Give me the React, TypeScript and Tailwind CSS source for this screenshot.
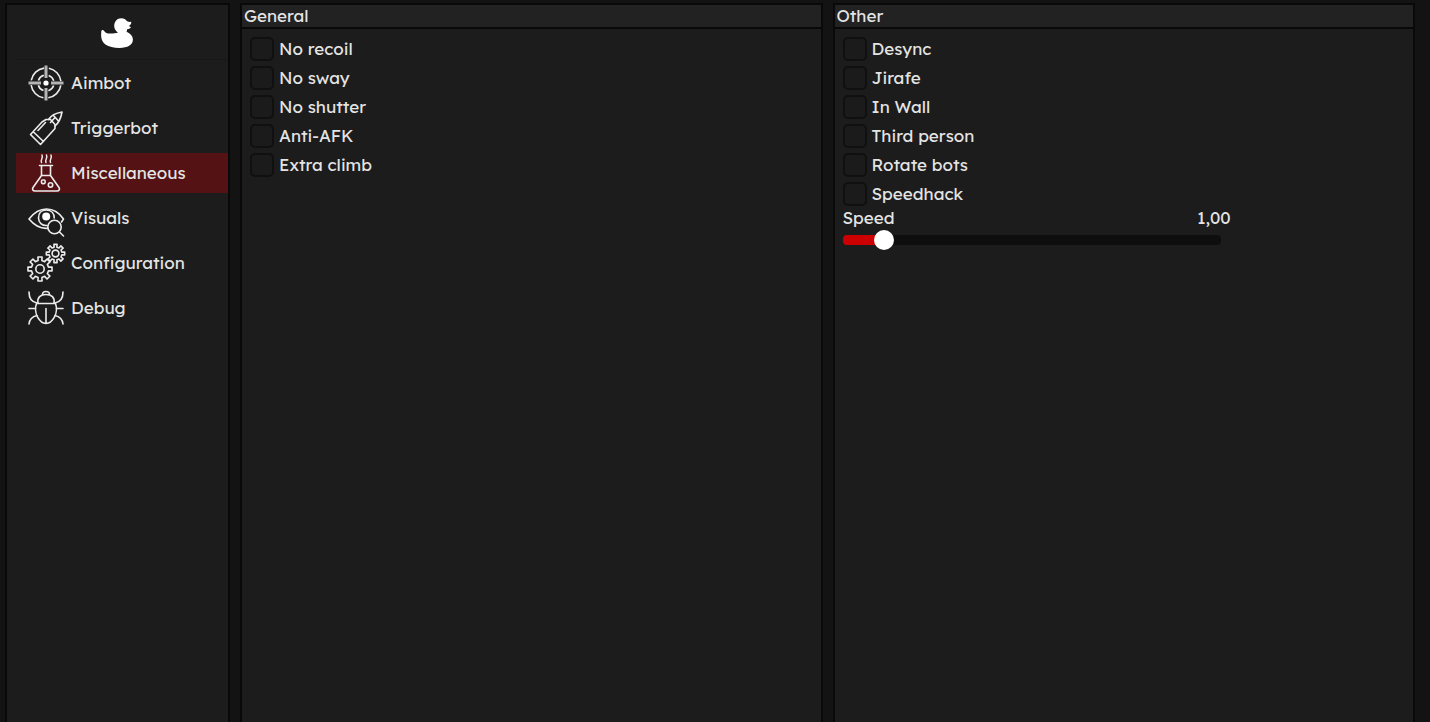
import { useState } from "react";
import type { CSSProperties, ReactNode } from "react";

function Icon({ children }: { children: ReactNode }) {
  return (
    <svg
      viewBox="0 0 40 40"
      className="size-10 shrink-0"
      fill="none"
      stroke="#ececec"
      strokeWidth="1.6"
      strokeLinecap="round"
      strokeLinejoin="round"
      aria-hidden="true"
    >
      {children}
    </svg>
  );
}

function AimIcon() {
  return (
    <Icon>
      <circle cx="20" cy="20" r="15" strokeDasharray="18.6 4.96" strokeDashoffset="-2.48" strokeLinecap="butt" />
      <circle cx="20" cy="20" r="8" strokeDasharray="7.6 4.97" strokeDashoffset="-2.48" strokeLinecap="butt" />
      <path d="M20 2.500v12.500M20 25v12.500M2.500 20h12.500M25 20h12.500" stroke="#b4b4b4" strokeWidth="3" strokeLinecap="butt" />
      <circle cx="20" cy="20" r="2.6" fill="#fff" stroke="none" />
    </Icon>
  );
}

function BulletIcon() {
  return (
    <Icon>
      <path d="M4.500 26.500 14.500 36.500 29 20.500V16.500L24.500 11.500H20L16 14zM7 23.500l10.500 10M12 22.500l7.500-8" />
      <path d="M22.500 11.500C25 7.500 30 5 36 4 35 10 33 14.500 29 18M27.500 7.500l4.500 5M24.500 14.500 29 9.500" />
    </Icon>
  );
}

function FlaskIcon() {
  return (
    <Icon>
      <path d="M13.500 12.500h13M15.500 13v9.500L7 34.500c-1.200 2 0 3.500 2 3.500h22c2 0 3.200-1.500 2-3.500L24.500 22.500V13M15.500 22.500h9" />
      <rect x="15.500" y="27" width="3.600" height="3.600" rx="1" />
      <circle cx="24.500" cy="32" r="2.200" />
      <path d="M15.500 9.500c-1.600-2.500 2-4 .5-7.500M20 9.500c-1.600-2.500 2-4 .5-7.500M24.500 9.500c-1.600-2.500 2-4 .5-7.500" strokeWidth="1.500" />
    </Icon>
  );
}

function EyeIcon() {
  return (
    <Icon>
      <path d="M22 30.300C14.500 31 8 27 3 21 8 14.500 14 11 20.500 11S33 14.500 37.500 21l-2 3" />
      <path d="M21 27.500c-5 .3-8.500-3-8.500-7.500s2.500-8 7.700-8 8 3.500 8 8" />
      <circle cx="20.200" cy="18.500" r="4" fill="#fff" stroke="none" />
      <circle cx="28.500" cy="29" r="6.700" />
      <path d="m33.500 34 4 4" />
    </Icon>
  );
}

function gearPath(cx: number, cy: number, inner: number, outer: number) {
  const step = Math.PI / 4;
  const points: string[] = [];
  for (let i = 0; i < 8; i += 1) {
    const corners = [
      [inner, -0.22],
      [outer, -0.17],
      [outer, 0.17],
      [inner, 0.22],
    ];
    for (const [radius, offset] of corners) {
      const angle = i * step + offset;
      points.push(`${(cx + radius * Math.cos(angle)).toFixed(2)} ${(cy + radius * Math.sin(angle)).toFixed(2)}`);
    }
  }
  return `M${points.join("L")}Z`;
}

function GearsIcon() {
  return (
    <Icon>
      <path d={gearPath(14, 26, 8.7, 12.2)} />
      <circle cx="14" cy="26" r="4.200" />
      <path d={gearPath(29.5, 10.5, 6.5, 9.3)} />
      <circle cx="29.500" cy="10.500" r="3.400" />
    </Icon>
  );
}

function BugIcon() {
  return (
    <Icon>
      <path d="M16.500 6.500c0-4 7-4 7 0M12 15C11 9.500 14.500 6.500 20 6.500s9 3 8 8.500M10.500 15.500h19c1.500 4 1 10-1.100 13.700-2 3.600-4.900 6.300-8.400 6.300s-6.400-2.700-8.400-6.300C9.500 25.500 9 19.500 10.500 15.500zM20 20.500v14.500" />
      <path d="M3 4c0 6 2.500 10 8 11M37 4c0 6-2.500 10-8 11M3 20.500h6.500M30.500 20.500H37M11 27.500C6.500 28.500 3.500 31 3 36M29 27.500c4.500 1 7.500 3.500 8 8.500" />
    </Icon>
  );
}

const tabs = [
  { name: "Aimbot", icon: <AimIcon /> },
  { name: "Triggerbot", icon: <BulletIcon /> },
  { name: "Miscellaneous", icon: <FlaskIcon /> },
  { name: "Visuals", icon: <EyeIcon /> },
  { name: "Configuration", icon: <GearsIcon /> },
  { name: "Debug", icon: <BugIcon /> },
];

function Panel({ title, children }: { title: string; children: ReactNode }) {
  return (
    <section className="flex min-w-0 flex-1 flex-col border-2 border-b-0 border-[#090909] bg-[#1c1c1c]">
      <h2 className="border-b-2 border-[#090909] bg-[#222222] px-0.5 text-[17px] leading-[22px] font-normal">
        {title}
      </h2>
      <div className="flex flex-col px-2 pt-2">{children}</div>
    </section>
  );
}

function Toggles({ names }: { names: string[] }) {
  return (
    <div className="flex flex-col items-start gap-[5px]">
      {names.map((name) => (
        <label key={name} className="flex items-center gap-[5px] text-[17px] leading-6">
          <input
            type="checkbox"
            className="size-6 shrink-0 appearance-none rounded-[5px] border-2 border-[#101010] bg-[#1b1b1b] checked:bg-[#cc0000]"
          />
          {name}
        </label>
      ))}
    </div>
  );
}

function SpeedSlider() {
  const [speed, setSpeed] = useState(1);
  const max = 11.5;
  const fill = { "--fill": `${(speed / max) * 94 + 3}%` } as CSSProperties;
  return (
    <div className="flex w-[69%] flex-col">
      <div className="flex items-center justify-between text-[17px] leading-6">
        <label htmlFor="speed">Speed</label>
        <output htmlFor="speed">{speed.toFixed(2).replace(".", ",")}</output>
      </div>
      <div className="flex pr-[10px]">
        <input
          id="speed"
          type="range"
          min="0"
          max={max}
          step="0.01"
          value={speed}
          onChange={(e) => setSpeed(Number(e.target.value))}
          style={fill}
          className="h-5 w-full appearance-none bg-transparent [&::-webkit-slider-runnable-track]:h-[10px] [&::-webkit-slider-runnable-track]:rounded-[4px] [&::-webkit-slider-runnable-track]:bg-[linear-gradient(to_right,#cc0000_var(--fill),#0e0e0e_var(--fill))] [&::-webkit-slider-thumb]:-mt-[5px] [&::-webkit-slider-thumb]:size-5 [&::-webkit-slider-thumb]:appearance-none [&::-webkit-slider-thumb]:rounded-full [&::-webkit-slider-thumb]:bg-white"
        />
      </div>
    </div>
  );
}

export default function App() {
  const [active, setActive] = useState("Miscellaneous");
  return (
    <main className="flex min-h-screen gap-[10px] bg-[#131313] pt-[3px] pr-[15px] pl-[5px] font-['Lexend','Inter',sans-serif] text-[#e4e4e4]">
      <aside className="flex w-[225px] shrink-0 flex-col border-2 border-b-0 border-[#090909] bg-[#1c1c1c] pl-[9px]">
        <div className="flex h-[55px] items-center justify-center border-b border-[#181818] pr-[10px]">
          <svg viewBox="0 0 32 32" className="size-8" fill="#fff" role="img" aria-label="Duck">
            <path d="M.3 15c.2-1.200 1.800-1.500 2.500-.6 1.500 2.400 3.700 3.200 6.500 3.100 3.200-.1 5.600-.3 7.700-.8-2.300-1.700-3.800-3.900-3.800-6.600C13.200 5.600 16 2.200 20.400 2.200c2.400 0 4.300 1.200 5.700 3.100 1.500.7 2.900.8 4.100.5.300 2-.8 3.400-2.400 4.100l2.200 1.400c-.9 1.400-2.400 1.900-3.600 1.700-.3 1.100-.8 2-.8 2.800 3.800 1.900 6.300 4.400 6.300 7.700 0 5.600-5.300 8.400-13.400 8.400C6.500 31.900.1 27.500.1 19.500z" />
          </svg>
        </div>
        <nav className="flex flex-col gap-[5px] pt-[3px]">
          {tabs.map((tab) => (
            <button
              key={tab.name}
              type="button"
              aria-current={tab.name === active ? "page" : undefined}
              onClick={() => setActive(tab.name)}
              className={`flex h-10 items-center gap-[5px] pl-[10px] text-left text-[17px] leading-6 ${
                tab.name === active ? "bg-[#541214]" : "bg-transparent"
              }`}
            >
              {tab.icon}
              {tab.name}
            </button>
          ))}
        </nav>
      </aside>
      <Panel title="General">
        <Toggles names={["No recoil", "No sway", "No shutter", "Anti-AFK", "Extra climb"]} />
      </Panel>
      <Panel title="Other">
        <Toggles names={["Desync", "Jirafe", "In Wall", "Third person", "Rotate bots", "Speedhack"]} />
        <SpeedSlider />
      </Panel>
    </main>
  );
}
